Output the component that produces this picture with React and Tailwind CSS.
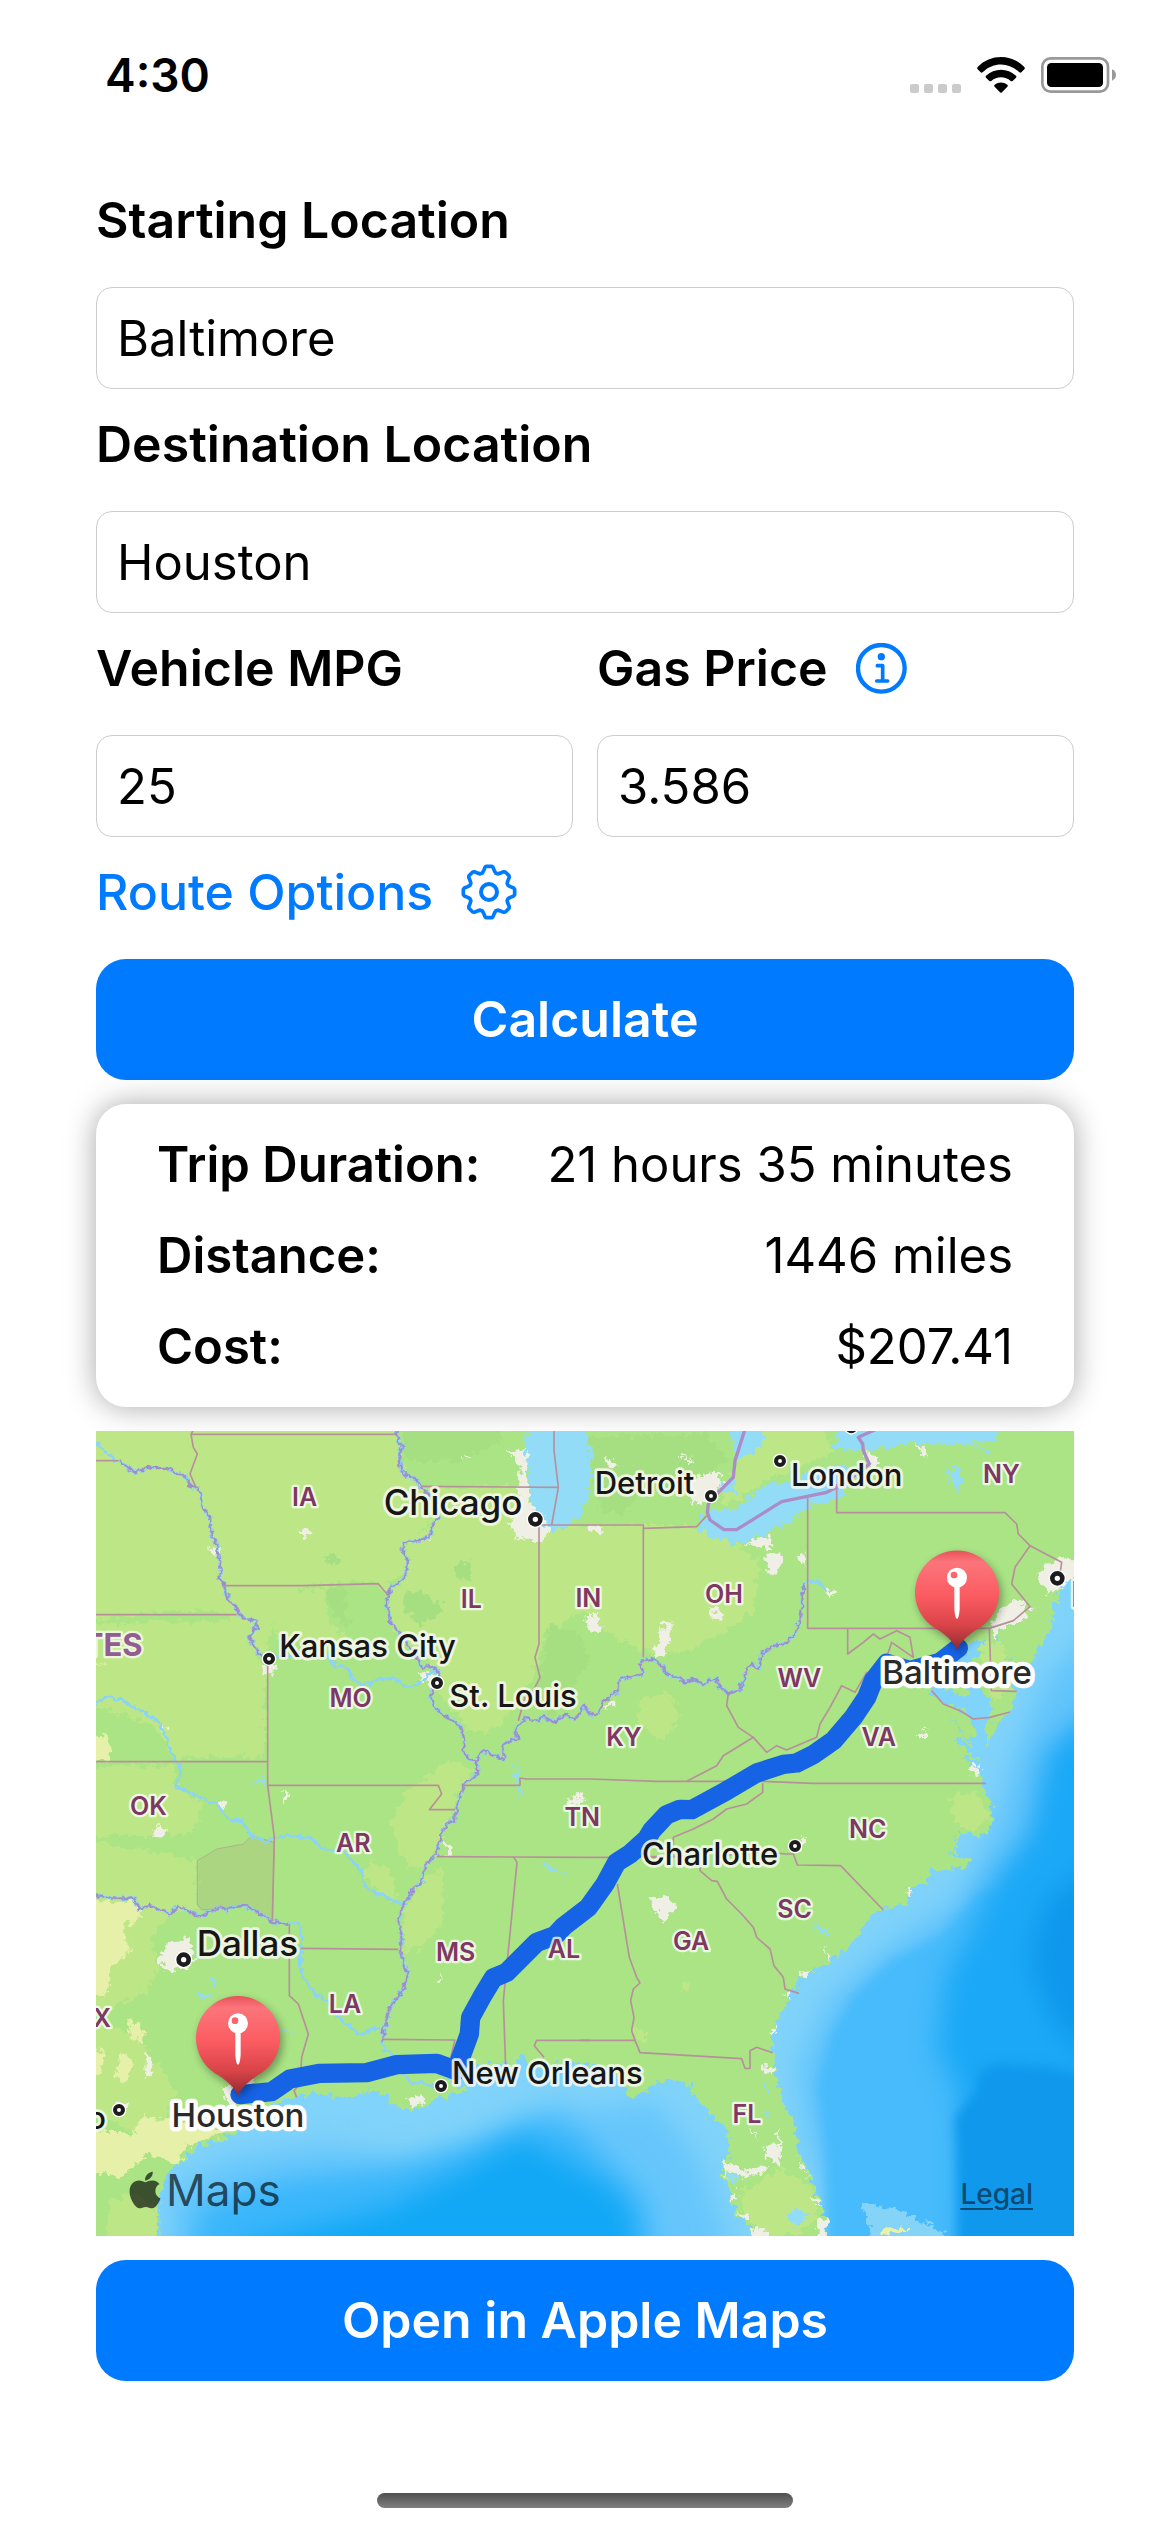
import { useState } from "react";
import { FaApple } from "react-icons/fa";

const GEAR_TEETH = [0, 45, 90, 135, 180, 225, 270, 315];

function gearPath() {
  const tooth = [[-20, -57], [-16, -64], [-12, -74], [-8, -77], [8, -77], [12, -74], [16, -64], [20, -57]];
  const points = GEAR_TEETH.flatMap((deg) => {
    const a = (deg * Math.PI) / 180;
    return tooth.map(([x, y]) => `${(x * Math.cos(a) - y * Math.sin(a)).toFixed(1)} ${(x * Math.sin(a) + y * Math.cos(a)).toFixed(1)}`);
  });
  return `M${points.join("L")}Z`;
}

function GearIcon() {
  return (
    <svg viewBox="-84 -84 168 168" className="size-14 shrink-0" fill="none" stroke="currentColor" strokeWidth="11" strokeLinejoin="round" aria-hidden="true">
      <path d={gearPath()} />
      <circle r="24" strokeWidth="12" />
    </svg>
  );
}

function InfoIcon() {
  return (
    <svg viewBox="0 0 153 153" className="size-[51px] shrink-0" fill="none" stroke="currentColor" strokeLinecap="round" strokeLinejoin="round" aria-hidden="true">
      <circle cx="76" cy="76" r="70" strokeWidth="13" />
      <circle cx="76" cy="41" r="11" fill="currentColor" stroke="none" />
      <path d="M64 68H80V114M62 114H95" strokeWidth="11" />
    </svg>
  );
}

function StatusBar() {
  return (
    <header className="flex h-[149px] items-center justify-between pr-[53px] pl-[105px]">
      <time className="text-[46px] leading-none font-semibold">4:30</time>
      <div className="flex items-center gap-4">
        <div className="flex gap-[5px] self-end">
          {[0, 1, 2, 3].map((i) => (
            <span key={i} className="size-[9px] rounded-xs bg-[#cbcbcb]" />
          ))}
        </div>
        <svg viewBox="0 0 144 108" className="h-9 w-12" aria-label="Wi-Fi">
          <path d="M2 30C40-10 104-10 142 30Q145 34 142 37L133 46Q130 48 127 46C95 15 49 15 17 46Q14 48 11 46L2 37Q-1 34 2 30Z" />
          <path d="M27 56C52 32 92 32 117 56Q120 59 117 62L107 72Q104 74 101 72C85 57 59 57 43 72Q40 74 37 72L27 62Q24 59 27 56Z" />
          <path d="M53 83C65 74 79 74 91 83Q94 86 91 89L75 106Q72 109 69 106L53 89Q50 86 53 83Z" />
        </svg>
        <svg viewBox="0 0 228 108" className="h-9 w-[76px]" aria-label="Battery">
          <rect x="4" y="4" width="197" height="100" rx="25" fill="none" stroke="#999" strokeWidth="8" />
          <rect x="18" y="18" width="168" height="72" rx="13" />
          <path d="M213 37Q225 43 225 54T213 71Z" fill="#999" />
        </svg>
      </div>
    </header>
  );
}

function Field({ id, label, value, onChange, accessory }) {
  return (
    <div className="min-w-0 flex-1">
      <div className="mt-6 mb-9 flex h-[62px] items-center gap-7">
        <label htmlFor={id} className="text-[50px] leading-none font-semibold">{label}</label>
        {accessory}
      </div>
      <input
        id={id}
        value={value}
        onChange={(e) => onChange(e.target.value)}
        className="block h-[102px] w-full rounded-2xl border border-[#cdcdcd] bg-white px-5 text-[49px] outline-none"
      />
    </div>
  );
}

function PrimaryButton({ children }) {
  return (
    <button type="button" className="block h-[121px] w-full rounded-[30px] bg-[#007aff] text-[50px] font-semibold text-white">
      {children}
    </button>
  );
}

/* The map is drawn in four sheets; each has its own origin on the canvas. */
const NW = [-18, -21];
const NE = [1452, -21];
const SW = [-18, 1209];
const SE = [1452, 1209];

function at(sheet, coords) {
  const n = coords.trim().split(/\s+/).map(Number);
  const out = [];
  for (let i = 0; i < n.length; i += 2) out.push(`${n[i] + sheet[0]} ${n[i + 1] + sheet[1]}`);
  return out.join("L");
}
const line = (...parts) => `M${parts.join("L")}`;
const shape = (...parts) => `${line(...parts)}Z`;

const LAND = shape(
  "-60 -60", "3000 -60", "3000 380",
  at(NE, "1482 430 1450 470 1435 500 1420 560 1415 620 1370 690 1310 760 1290 720 1275 680 1255 650 1262 620 1250 640 1240 690 1262 740 1310 800 1300 850 1260 890 1240 930 1212 975 1215 920 1232 870 1228 820 1195 790 1175 740 1190 690 1225 645 1200 640 1160 675 1140 710 1160 760 1165 820 1120 800 1055 785 1055 810 1090 830 1130 850 1175 885 1190 930 1170 945 1100 865 1150 930 1180 975 1120 935 1160 985 1200 1010 1150 1000 1205 1050 1212 1100 1235 1140 1235 1210 1200 1235 1130 1225"),
  at(SE, "1130 50 1100 65 1165 75 1160 100 1045 110 1040 135 985 185 980 215 930 218 880 240 835 290 830 320 770 360 750 390 680 420 640 460 625 490 600 540 580 600 578 660 590 730 610 800 645 880 660 960 690 1020 710 1080 740 1155 740 1260 530 1260 510 1180 475 1150 455 1100 450 1060 425 1040 430 985 445 970 445 890 430 865 400 855 380 830 350 790 325 750 270 735 240 745 185 780 140 790 130 740 60 695"),
  at(SW, "1500 690 1360 692 1315 700 1300 655 1285 692 1200 692 1090 700 1060 740 1110 750 1130 765 1100 785 1040 790 1010 820 950 825 900 810 890 780 850 770 760 792 680 778 620 790 560 805 520 850 460 890 390 920 310 940 290 970 250 1000 215 1060 207 1120 205 1180 213 1260"),
  "-60 2480",
);

const LIGHT = [
  shape("-60 -60", at(NW, "920 -40 930 130 990 180 1020 300 940 360 950 440 900 480 885 520 860 470 640 490 560 560 520 700 400 560 200 560 -40 600")),
  shape(at(NW, "990 190 1300 190 1290 340 1360 330 1360 640 1330 760 1240 900 1150 930 1090 860 1040 800 1050 740 980 690 900 590 890 520 940 470 950 400 950 350 1030 300")),
  shape(at(NE, "-100 310 190 300 350 310 480 370 540 420 520 560 440 620 300 690 190 680 100 640 0 560 -60 600 -120 640 -120 310")),
  shape(at(NE, "520 -20 700 -20 760 80 700 110 560 170 470 230 420 240 460 150 500 60")),
  shape(at(NW, "-40 600 440 590 500 700 525 740 525 1000 260 1000 180 900 -40 830")),
  shape(at(NW, "540 520 700 490 720 600 780 640 700 680 620 640 560 640")),
  shape(at(NW, "-40 1030 250 1020 260 1090 340 1140 300 1230 -40 1240")),
  shape(at(NW, "1080 1010 1150 1040 1100 1110 1060 1240 1020 1320 960 1340 900 1200 960 1090")),
  shape(at(SW, "840 90 900 100 920 200 860 170 820 120")),
  shape(at(SW, "940 230 1000 130 1060 100 1060 260 1000 340 940 360")),
  shape(at(SW, "-40 20 120 40 320 80 320 220 240 240 180 320 210 400 160 480 60 520 -40 560")),
  shape(at(SW, "-40 560 140 600 210 700 260 770 220 880 140 900 -40 800")),
  shape(at(NE, "170 830 260 800 300 870 250 960 180 900")),
  shape(at(NE, "1210 650 1270 660 1300 790 1240 830 1200 700")),
  shape(at(NE, "1110 1120 1190 1100 1230 1180 1180 1220 1120 1190")),
  shape(at(SE, "480 1080 600 1000 690 1060 720 1160 640 1200 560 1206 500 1150")),
  shape(at(SW, "60 1100 140 1080 200 1120 205 1260 40 1260")),
  shape(at(SE, "160 590 195 590 200 630 175 625")),
  shape(at(SE, "300 450 330 440 335 455 310 475")),
];

const DARK = [
  shape(at(NW, "940 -20 1220 -20 1240 50 1100 110 940 110")),
  shape(at(NW, "700 490 760 490 780 620 730 570")),
  shape(at(NW, "700 400 740 390 745 425 705 415")),
  shape(at(NW, "950 500 1010 510 1070 560 990 600 940 560")),
  shape(at(NW, "1085 430 1150 405 1140 470 1100 455")),
  shape(at(NE, "20 40 380 30 440 100 370 180 180 200 140 270 60 260 40 160")),
  shape(at(NW, "1380 600 1460 620 1500 700 1390 880 1340 800")),
];

const YELLOW = [
  shape(at(SW, "-40 200 140 200 160 250 100 280 120 350 70 400 50 480 -40 470")),
  shape(at(SW, "110 560 160 580 155 630 120 610")),
  shape(at(SW, "90 650 130 690 110 740 75 730")),
  shape(at(SW, "-40 640 45 650 35 720 -40 740")),
  shape(at(SW, "160 850 290 860 420 895 300 930 260 990 170 960 90 1030 -40 1000 -40 880 130 900")),
  shape(at(NW, "-40 940 55 940 65 1010 -40 1015")),
  shape(at(NW, "-40 690 45 720 -40 730")),
];

const URBAN = [
  shape(at(NW, "1250 85 1310 75 1310 150 1320 240 1370 300 1390 330 1350 350 1275 340 1255 300 1290 200 1295 130")),
  shape(at(NE, "320 180 400 140 430 170 400 230 340 240")),
  shape(at(NE, "490 355 570 335 582 378 530 370")),
  shape(at(NE, "550 390 610 400 590 455 565 440")),
  shape(at(NE, "655 385 680 400 672 425")),
  shape(at(NE, "250 590 285 600 255 690 215 710 240 640")),
  shape(at(NE, "385 545 430 575 410 595 390 580")),
  shape(at(NE, "20 570 65 570 50 630 15 610")),
  shape(at(NE, "80 830 110 820 100 850 75 850")),
  shape(at(NE, "740 500 770 500 750 525")),
  shape(at(NE, "80 105 110 110 105 135 75 130")),
  shape(at(NE, "305 95 335 105 325 125")),
  shape(at(NE, "850 80 900 100 890 130 855 120")),
  shape(at(NE, "1000 55 1030 70 1035 100")),
  shape(at(NE, "20 305 70 305 65 325 20 320")),
  shape(at(NE, "1260 560 1300 530 1350 545 1330 590 1260 610 1240 650 1235 610")),
  shape(at(NE, "1390 430 1440 400 1500 410 1500 440 1440 490 1400 510 1370 470")),
  shape(at(NE, "1160 1030 1200 1020 1205 1050 1180 1055")),
  shape(at(NE, "1020 940 1035 915 1035 950")),
  shape(at(NW, "650 305 665 330 640 340 630 325")),
  shape(at(NW, "350 375 390 370 380 395")),
  shape(at(NW, "515 725 560 725 550 750 520 745")),
  shape(at(NW, "980 745 1050 745 1040 790 1010 785")),
  shape(at(NW, "990 335 1020 335 1010 352")),
  shape(at(NW, "1430 1130 1470 1110 1490 1130 1440 1150")),
  shape(at(NW, "375 1130 410 1140 400 1160")),
  shape(at(NW, "205 1195 240 1230 180 1240")),
  shape(at(NW, "215 900 238 910 220 922")),
  shape(at(NW, "575 1100 595 1110 585 1145")),
  shape(at(NW, "1115 95 1145 95 1130 110")),
  shape(at(SW, "240 320 300 310 310 380 270 410 220 405 210 370")),
  shape(at(SW, "170 660 190 670 185 720 165 725")),
  shape(at(SW, "410 755 480 740 500 780 430 815 400 790")),
  shape(at(SW, "1060 35 1095 40 1080 70")),
  shape(at(SW, "1040 445 1060 420 1055 440")),
  shape(at(SW, "945 800 1000 780 1005 810 975 815")),
  shape(at(SW, "80 800 115 800 105 830")),
  shape(at(SE, "205 190 265 190 290 210 245 265")),
  shape(at(SE, "640 40 675 5 665 55")),
  shape(at(SE, "730 340 755 380 740 375")),
  shape(at(SE, "655 410 690 415 670 430")),
  shape(at(SE, "545 690 585 700 580 725 550 715")),
  shape(at(SE, "615 475 640 470 625 495")),
  shape(at(SE, "570 600 595 575 580 610")),
  shape(at(SE, "980 170 1000 165 990 190")),
  shape(at(SE, "545 940 590 930 598 880 605 960 590 990 560 960")),
  shape(at(SE, "505 870 535 915 520 905")),
  shape(at(SE, "430 980 490 1010 565 995 550 1015 480 1030 440 1010 435 1045")),
  shape(at(SE, "445 1080 468 1070 465 1105")),
  shape(at(SE, "475 1135 515 1140 495 1160")),
  shape(at(SE, "715 1160 740 1150 740 1240 710 1240")),
  shape(at(SE, "655 970 690 1030 665 1000")),
  shape(at(SE, "515 1185 560 1190 565 1230 515 1230")),
  shape(at(SE, "695 1090 720 1110 700 1110")),
];

const LAKES = [
  shape(at(NW, "1315 -40 1475 -40 1500 100 1500 210 1475 270 1440 305 1400 322 1360 315 1325 250 1315 140 1305 80")),
  shape(at(NE, "-20 -40 15 -40 30 100 30 190 0 250 -20 250")),
  shape(at(NE, "455 -40 550 -40 550 50 520 85 470 105 455 70")),
  shape(at(NE, "410 170 460 165 470 210 425 210")),
  shape(at(NE, "350 305 380 270 400 255 470 255 540 190 640 165 780 120 830 140 780 225 700 240 630 290 530 340 460 360 390 340")),
  shape(at(NE, "760 70 800 -40 1310 -40 1240 50 1130 65 1000 55 900 75 800 80")),
  shape(at(NE, "1195 70 1240 75 1225 82")),
  shape(at(NE, "1100 135 1112 140 1105 190")),
  shape(at(NE, "1118 120 1145 170 1125 200")),
  shape(at(SE, "620 1150 655 1118 680 1145 655 1180")),
  shape(at(SE, "550 720 570 770 560 790")),
  shape(at(SE, "550 830 572 840 560 850")),
  shape(at(SE, "435 1015 475 1020 460 1050 440 1035")),
  shape(at(SW, "355 425 380 450 365 460")),
  shape(at(SW, "335 475 365 485 335 492")),
  shape(at(SW, "570 575 605 600 580 600")),
  shape(at(NW, "490 1080 525 1055 528 1078")),
  shape(at(NW, "1270 1015 1285 1060 1305 1130 1285 1100")),
  shape(at(SE, "685 260 750 300 740 310")),
  shape(at(SE, "470 250 490 238 490 250")),
  shape(at(SW, "1345 92 1395 95 1425 125 1380 105")),
];

const RIVERS = [
  line(at(NW, "18 55 50 90 90 115")),
  line(at(NW, "18 840 55 815 90 825 210 895 245 990 265 1020 275 1045 255 1085 330 1120 380 1140 415 1185 455 1190 485 1235 530 1255 560 1240 620 1235 665 1245 700 1275 760 1280 815 1340 825 1390 935 1440")),
  line(at(NW, "550 700 640 690 720 700 735 725 770 730 790 770 820 785 865 765 910 765 955 790 1000 768 1025 740 1050 745")),
  line(at(SW, "600 270 625 265 635 320 630 400 640 430 680 485 710 500 755 560 810 600 870 580")),
  line(at(SW, "875 610 885 650 915 665 940 720 965 750 1000 745 1050 770")),
  line(at(NE, "670 480 710 468 740 500")),
];

const BORDER_RIVERS = [
  line(at(NW, "90 115 140 148 160 132 230 132 290 160 300 185 325 192 340 250 360 280 365 340 382 360 385 400 392 430 388 460 405 490 415 525 440 555 455 580 500 590 500 610 478 640 505 690 520 700")),
  line(at(NW, "920 10 925 50 940 70 928 90 932 130 950 155 980 168 995 195 1030 220 1045 280 1025 310 1020 335 990 348 945 355 935 380 955 410 950 440 935 470 905 485 890 530 900 590 930 630 965 675 985 705 995 735 1020 725 1050 745 1035 790 1020 815 1030 845 1070 880 1115 910 1125 960 1120 980 1135 1005 1160 1015 1165 1050 1120 1080 1110 1120 1100 1150 1095 1190 1070 1200 1050 1240 1040 1290 1010 1320 995 1370 970 1400 940 1440 925 1490 935 1540 930 1580 955 1660 930 1710 900 1750 880 1820 880 1850")),
  line(at(NW, "1160 1015 1175 980 1240 1005 1240 960 1285 940 1275 915 1305 882 1340 890 1360 880 1395 895 1430 870 1455 885 1485 845"), at(NE, "20 865 50 875 65 840 90 815 115 800 120 765 190 750 180 710 215 705 240 720 260 750 320 775 340 768 370 780 410 760 415 785 445 808 480 800 495 750 515 720 535 735 545 690 580 665 610 662 645 630 665 560 670 480")),
  line(at(SW, "0 178 75 195 130 190 145 225 180 215 240 240 265 215 330 250 380 225 465 215 520 245 555 265 600 270")),
];

const STATE_LINES = [
  line(at(NW, "303 31 920 31")),
  line(at(NW, "320 0 303 31 310 70 322 90 300 150 318 190")),
  line(at(NW, "18 110 85 110")),
  line(at(NW, "18 572 440 572")),
  line(at(NW, "405 485 640 485 865 479 895 515")),
  line(at(NW, "995 187 1405 190 1385 303")),
  line(at(NW, "1392 21 1392 80 1405 190")),
  line(at(NW, "1347 303 1347 660 1335 700 1350 760 1330 800 1305 820 1285 890")),
  line(at(NW, "1347 303 1470 303"), at(NE, "190 303 190 700")),
  line(at(NE, "190 313 350 308 380 275")),
  line(at(NE, "683 220 683 613 1228 613")),
  line(at(NE, "770 180 770 266 1275 266 1310 300 1315 330 1350 365 1305 430 1295 480 1350 548 1300 590 1228 613 1234 800 1310 802")),
  line(at(NE, "1350 365 1445 415 1440 450")),
  line(at(NE, "803 613 803 690 850 655 880 630 900 645 950 620 990 640 1000 700 935 655 920 700")),
  line(at(NE, "445 808 440 845 475 910 520 940 560 985 590 965 620 978 710 940 720 900 750 850 785 785 825 805 860 745 880 755")),
  line(at(NE, "520 940 430 995 410 1025 320 1072")),
  line(at(NW, "1120 1084 1290 1084 1290 1062 1310 1065 1500 1065"), at(NE, "230 1072 550 1072 700 1078 1218 1078")),
  line(at(NE, "548 1078 548 1105 500 1140 440 1155 400 1185 340 1215 280 1240 280 1300 0 1300"), at(SW, "1040 68")),
  line(at(NW, "533 725 533 1084 553 1240"), at(SW, "547 260")),
  line(at(NW, "18 1013 533 1013")),
  line(at(NW, "533 1084 1045 1084 1055 1110 1018 1157 1095 1157")),
  line(at(SW, "598 270 598 485 625 510 655 600 635 670 630 750 612 770 620 790")),
  line(at(SW, "632 343 925 346")),
  line(at(SW, "877 616 1095 618 1080 680")),
  line(at(SW, "1270 68 1281 85 1255 350 1240 500 1247 700")),
  line(at(SW, "1500 619 1340 619 1333 635 1362 670")),
  line(at(SE, "0 619 165 619 180 656 485 674 495 703 510 703 510 650 530 640 578 656")),
  line(at(SE, "112 150 148 370 170 430 180 447 160 465 152 500 162 550 155 590 165 619")),
  line(at(SE, "180 68 360 68 360 110 395 140 412 142 440 195 485 240 520 280 530 310 570 345 582 395 610 430 615 465 657 478")),
  line(at(SE, "400 66 560 55 620 60 640 60 652 93 782 95 910 228")),
  line(at(NE, "1055 800 1090 840 1140 860 1180 885 1230 880 1290 864")),
];

const NATION_LINES = [
  line(at(NE, "500 0 465 110 460 160 410 210 385 240 382 265 390 288 432 317 470 317 605 233 740 205 770 190 830 150 868 120 850 80 848 60 835 40 890 15")),
];

const ROUTE = line(
  at(SW, "450 782 545 773 600 735 690 718 830 716 920 692 1040 688 1100 710"),
  at(SW, "1105 690 1138 600 1142 550 1175 490 1210 432 1250 415 1340 325 1395 305 1420 278 1495 220"),
  at(SE, "75 150 110 85 150 60 200 15"),
  at(NE, "215 1220 260 1172 300 1156 335 1157 440 1100 530 1047 610 1021 650 1017 700 992 760 950 820 880 860 820 880 770 920 718 990 740 1080 715 1135 672"),
);

const CITIES = [
  { name: "Chicago", sheet: NW, x: 881, y: 272, dot: [1336, 286], big: true },
  { name: "Kansas City", sheet: NW, x: 568, y: 698, dot: [537, 704] },
  { name: "St. Louis", sheet: NW, x: 1078, y: 850, dot: [1041, 777] },
  { name: "Detroit", sheet: NE, x: 44, y: 209, dot: [393, 216] },
  { name: "London", sheet: NE, x: 633, y: 185, dot: [600, 111] },
  { name: "New York", sheet: NE, x: 1472, y: 550, dot: [1432, 463], big: true },
  { name: "Charlotte", sheet: SE, x: 186, y: 93, dot: [645, 36] },
  { name: "Dallas", sheet: SW, x: 320, y: 366, dot: [281, 377], big: true },
  { name: "New Orleans", sheet: SW, x: 1086, y: 750, dot: [1053, 756] },
];

const STATES = [
  ["IA", NW, 644, 245], ["IL", NW, 1144, 552], ["IN", NE, 25, 548], ["OH", NE, 432, 537],
  ["NY", NE, 1264, 177], ["WV", NE, 658, 790], ["MO", NW, 782, 850], ["KY", NE, 132, 965],
  ["VA", NE, 896, 967], ["OK", NW, 175, 1174], ["TN", NW, 1477, 1206], ["NC", NE, 863, 1242],
  ["AR", SW, 790, 55], ["SC", SE, 644, 252], ["MS", SW, 1097, 381], ["AL", SW, 1422, 373],
  ["GA", SE, 333, 348], ["LA", SW, 765, 538], ["FL", SE, 501, 866], ["X", SW, 36, 580],
];

function Shapes({ list, fill }) {
  return <g fill={fill}>{list.map((d) => <path key={d} d={d} />)}</g>;
}

function Lines({ list, stroke, width }) {
  return (
    <g fill="none" stroke={stroke} strokeWidth={width} strokeLinejoin="round">
      {list.map((d) => <path key={d} d={d} />)}
    </g>
  );
}

function Pin({ x, y, label, labelY }) {
  return (
    <g transform={`translate(${x} ${y})`}>
      <path d="M0 173C-10 150-25 135-60 111A126 126 0 1 1 60 111C25 135 10 150 0 173Z" fill="#000" opacity="0.35" filter="url(#soft)" transform="translate(8 12)" />
      <path d="M0 173C-10 150-25 135-60 111A126 126 0 1 1 60 111C25 135 10 150 0 173Z" fill="url(#pin)" />
      <path d="M-8-20H8V50Q6 78 0 80Q-6 78-8 50Z" fill="#fff" />
      <circle cy="-44" r="30" fill="#fff" />
      <circle cx="-9" cy="-52" r="10" fill="#ff6468" />
      <text y={labelY} textAnchor="middle" fontSize="99" fontWeight="500" fill="#2a2a2a" stroke="#fff" strokeWidth="26" strokeLinejoin="round" paintOrder="stroke">{label}</text>
    </g>
  );
}

function RouteMap() {
  return (
    <div className="relative">
      <svg viewBox="0 0 2934 2415" className="block w-full" role="img" aria-label="Route from Houston to Baltimore">
        <defs>
          <filter id="rough" x="-2%" y="-2%" width="104%" height="104%" colorInterpolationFilters="sRGB">
            <feTurbulence type="fractalNoise" baseFrequency="0.05" numOctaves="3" seed="4" />
            <feDisplacementMap in="SourceGraphic" scale="44" xChannelSelector="R" yChannelSelector="G" />
          </filter>
          <filter id="wavy" x="-2%" y="-2%" width="104%" height="104%" colorInterpolationFilters="sRGB">
            <feTurbulence type="fractalNoise" baseFrequency="0.06" numOctaves="2" seed="9" />
            <feDisplacementMap in="SourceGraphic" scale="22" xChannelSelector="R" yChannelSelector="G" />
          </filter>
          <filter id="soft" x="-30%" y="-30%" width="160%" height="160%"><feGaussianBlur stdDeviation="12" /></filter>
          <filter id="depth" x="-20%" y="-20%" width="140%" height="140%" colorInterpolationFilters="sRGB"><feGaussianBlur stdDeviation="38" /></filter>
          <filter id="shelf" x="-20%" y="-20%" width="140%" height="140%" colorInterpolationFilters="sRGB"><feGaussianBlur stdDeviation="16" /></filter>
          <linearGradient id="pin" x1="0" y1="0" x2="0" y2="1">
            <stop offset="0" stopColor="#e8525a" />
            <stop offset="0.12" stopColor="#fb757a" />
            <stop offset="0.45" stopColor="#fb5c62" />
            <stop offset="0.75" stopColor="#d94449" />
            <stop offset="1" stopColor="#8f2a2f" />
          </linearGradient>
        </defs>

        <rect width="2934" height="2415" fill="#80d3fa" />
        <g filter="url(#depth)">
          <path fill="#66c6fb" d={shape(at(SW, "240 1400 240 1060 420 970 700 930 960 970 1130 920 1400 800"), at(SE, "30 830 220 800 350 960 440 1200 440 1400"))} />
          <path fill="#3ab6fb" d={shape(at(SW, "270 1400 330 1120 560 1040 900 1000 1130 930 1280 860 1380 850 1482 900"), at(SE, "40 940 120 1010 200 1100 230 1400"))} />
          <path fill="#12a8f5" d={shape(at(SW, "420 1400 460 1230 700 1170 900 1120 1120 1010 1290 910 1400 970"), at(SE, "30 1025 100 1070 155 1140 180 1400"))} />
          <path fill="#62c4fb" d={shape(at(NE, "1600 560 1400 760 1300 1000 1230 1240"), at(SE, "1120 200 900 350 740 500 650 700 680 900 740 1080 760 1400 1600 1400"))} />
        </g>
        <g filter="url(#shelf)">
          <path fill="#47bbfb" d={shape(at(SE, "1200 170 1080 300 930 380 820 480 750 600 710 760 735 950 745 1300 1300 1300 1300 170"))} />
        </g>
        <g filter="url(#depth)">
          <path fill="#1ba8f6" d={shape(at(NE, "1600 800 1400 980 1345 1230"), at(SE, "1250 120 1170 300 1100 420 1070 640 1130 760 1150 900 1150 1400 1600 1400"))} />
          <path fill="#0e97ec" d={shape(at(SE, "1600 60 1400 200 1350 380 1420 560 1600 720"))} />
        </g>
        <g filter="url(#shelf)">
          <path fill="#0f98ec" d={shape(at(SE, "1195 715 1250 690 1400 700 1600 740 1600 1400 1135 1400 1130 960 1125 850 1190 770"))} />
        </g>
        <g filter="url(#rough)">
          <path fill="#a0def6" opacity="0.7" d={shape(at(SE, "840 1100 960 1130 1100 1200 1090 1230 890 1230 860 1170"))} />
          <path fill="#e9f0a9" d={shape(at(SE, "905 1190 985 1178 985 1190 900 1206"))} />
          <path d={LAND} fill="#aae485" />
          <Shapes list={LIGHT} fill="#bde787" />
          <Shapes list={DARK} fill="#a6df82" />
          <Shapes list={YELLOW} fill="#e6f0a8" />
          <Shapes list={LAKES} fill="#92dcf8" />
          <Shapes list={URBAN} fill="#f0efe5" />
        </g>
        <path d={shape(at(SW, "322 80 380 45 460 30 485 5 553 25 547 258 465 215 335 228 322 210"))} fill="#b08e70" fillOpacity="0.18" stroke="#b08a98" strokeOpacity="0.5" strokeWidth="3" />
        <g filter="url(#wavy)">
          <Lines list={RIVERS} stroke="#8ad3fa" width={8} />
          <Lines list={BORDER_RIVERS} stroke="#8fcdf3" width={11} />
          <Lines list={BORDER_RIVERS} stroke="#a08fc4" width={6} />
        </g>
        <Lines list={STATE_LINES} stroke="#b8909b" width={5} />
        <Lines list={NATION_LINES} stroke="#ab8bc8" width={10} />

        <path d={ROUTE} fill="none" stroke="#1763e6" strokeWidth="58" strokeLinecap="round" strokeLinejoin="round" />

        <g strokeLinejoin="round" paintOrder="stroke">
          <g fontSize="75" fontWeight="600" fill="#7f3763" stroke="#fff" strokeOpacity="0.75" strokeWidth="14" textAnchor="middle">
            {STATES.map(([name, sheet, x, y]) => (
              <text key={name} x={x + sheet[0]} y={y + sheet[1]}>{name}</text>
            ))}
          </g>
          <text x="140" y="676" textAnchor="end" fontSize="93" fontWeight="700" fill="#935c93" stroke="#fff" strokeOpacity="0.7" strokeWidth="14">TES</text>
          <g fill="#161616" stroke="#f8f8f0" strokeOpacity="0.85" strokeWidth="17" fontWeight="500">
            {CITIES.map((c) => (
              <text key={c.name} x={c.x + c.sheet[0]} y={c.y + c.sheet[1]} fontSize={c.big ? 105 : 93}>{c.name}</text>
            ))}
            <text x="30" y="2093" textAnchor="end" fontSize="93">o</text>
          </g>
        </g>
        {[...CITIES, { name: "San Antonio", sheet: SW, dot: [87, 828] }, { name: "Toronto", sheet: NE, dot: [814, 10] }].map((c) => (
          <g key={c.name} transform={`translate(${c.dot[0] + c.sheet[0]} ${c.dot[1] + c.sheet[1]})`}>
            <circle r={c.big ? 26 : 22} fill="#fff" />
            <circle r={c.big ? 15 : 12} fill="#fff" stroke="#1c1c1c" strokeWidth={c.big ? 14 : 12} />
          </g>
        ))}
        <Pin x={2583} y={484} label="Baltimore" labelY={274} />
        <Pin x={426} y={1821} label="Houston" labelY={268} />
      </svg>
      <div className="absolute bottom-6 left-7 flex items-center text-[44px] leading-none text-black/65">
        <FaApple className="size-[42px]" aria-hidden="true" />
        <span>Maps</span>
      </div>
      <a href="#legal" className="absolute right-[41px] bottom-7 text-[28px] leading-none font-medium text-[#0b4a75] underline underline-offset-4">Legal</a>
    </div>
  );
}

const SUMMARY = [
  ["Trip Duration:", "21 hours 35 minutes"],
  ["Distance:", "1446 miles"],
  ["Cost:", "$207.41"],
];

export default function App() {
  const [start, setStart] = useState("Baltimore");
  const [destination, setDestination] = useState("Houston");
  const [mpg, setMpg] = useState("25");
  const [gasPrice, setGasPrice] = useState("3.586");

  return (
    <div className="flex min-h-screen flex-col bg-white font-['Inter',sans-serif] text-black">
      <StatusBar />
      <main className="flex flex-col px-24 pt-4">
        <Field id="start" label="Starting Location" value={start} onChange={setStart} />
        <Field id="destination" label="Destination Location" value={destination} onChange={setDestination} />
        <div className="flex gap-6">
          <Field id="mpg" label="Vehicle MPG" value={mpg} onChange={setMpg} />
          <Field
            id="gas"
            label="Gas Price"
            value={gasPrice}
            onChange={setGasPrice}
            accessory={<button type="button" aria-label="About gas price" className="text-[#007aff]"><InfoIcon /></button>}
          />
        </div>
        <button type="button" className="mt-6 mb-9 flex h-[62px] items-center gap-7 self-start text-[50px] leading-none font-medium text-[#007aff]">
          Route Options
          <GearIcon />
        </button>
        <div className="flex flex-col gap-6">
          <PrimaryButton>Calculate</PrimaryButton>
          <dl className="flex flex-col gap-[30px] rounded-[30px] bg-white px-[61px] py-[30px] text-[49px] shadow-[0_0_30px_rgba(0,0,0,0.35)]">
            {SUMMARY.map(([term, value]) => (
              <div key={term} className="flex h-[61px] items-center justify-between leading-none">
                <dt className="font-semibold">{term}</dt>
                <dd>{value}</dd>
              </div>
            ))}
          </dl>
          <RouteMap />
          <PrimaryButton>Open in Apple Maps</PrimaryButton>
        </div>
      </main>
      <div className="mx-auto mt-auto mb-6 h-[15px] w-[416px] rounded-full bg-linear-to-b from-[#505050] to-[#808080]" />
    </div>
  );
}
